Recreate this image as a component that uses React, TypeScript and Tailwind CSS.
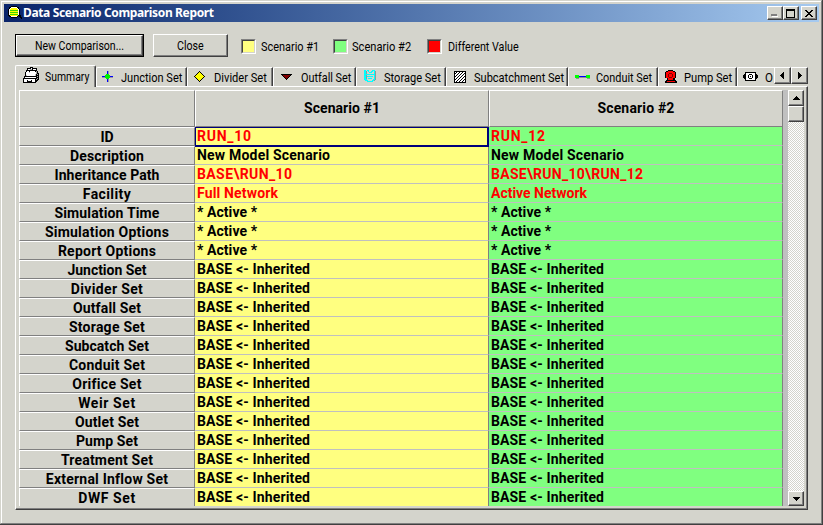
import { useLayoutEffect, useRef, useState, type ReactNode } from "react";

/** Text tracked so that it fills the given advance width. */
function Fit({ w, children, className = "" }: { w: number; children: string; className?: string }) {
  const ref = useRef<HTMLSpanElement>(null);
  const [spacing, setSpacing] = useState(0);
  useLayoutEffect(() => {
    const el = ref.current;
    if (el) setSpacing((w - el.getBoundingClientRect().width) / Math.max(1, children.length - 1));
  }, [w, children]);
  return (
    <span ref={ref} style={{ letterSpacing: spacing }} className={"inline-block whitespace-pre " + className}>
      {children}
    </span>
  );
}

/** Text condensed horizontally to the given width. */
function Narrow({ w, children, className = "" }: { w: number; children: string; className?: string }) {
  const ref = useRef<HTMLSpanElement>(null);
  const [scale, setScale] = useState(1);
  useLayoutEffect(() => {
    const el = ref.current;
    if (el) setScale(w / el.offsetWidth);
  }, [w, children]);
  return (
    <span style={{ width: w }} className={"block shrink-0 text-left whitespace-pre " + className}>
      <span ref={ref} style={{ transform: `scaleX(${scale})` }} className="inline-block origin-left">
        {children}
      </span>
    </span>
  );
}

function Icon({ children, w = 16, h = 16 }: { children: ReactNode; w?: number; h?: number }) {
  return (
    <svg width={w} height={h} viewBox={`0 0 ${w} ${h}`} shapeRendering="crispEdges" className="block shrink-0">
      {children}
    </svg>
  );
}

const SummaryIcon = () => (
  <Icon w={17} h={17}>
    <path d="M4 1h3V0h3v1h4v3h1v2h1v7h-1v1h-1v1h-1v1H0v-5h1V9h1V5h1V3h1z" fill="#000" />
    <path d="M5 2h2v1H5zM8 1h1v1H8zM10 2h3v1h-3zM4 4h2v1H4zM7 4h5v1H7zM3 5h10v4H3zM2 10h11v1H2zM1 12h11v3H1z" fill="#fff" />
    <path d="M7 2h2v1H7zM13 4h1v3h-1zM14 7h1v1h-1zM14 9h1v1h-1zM14 11h1v1h-1zM13 12h1v1h-1z" fill="#a0a0a0" />
    <path d="M4 13h1v1h3v-1h1v2H4z" fill="#000" />
    <path d="M3 8h1v1H3zM12 7h1v2h-1zM6 5h1v1H6z" fill="#c0c0c0" />
  </Icon>
);
const JunctionIcon = () => (
  <Icon>
    <path d="M8 3h1v11H8zM2 9h11v1H2z" fill="#9a9a9a" />
    <path d="M7 3h1v11H7zM2 8h11v1H2z" fill="#0000ff" />
    <path d="M6 6h3v1h1v3H9v1H6v-1H5V7h1z" fill="#00f000" />
  </Icon>
);
const DividerIcon = () => (
  <Icon>
    <path d="M7 3h1v1h1v1h1v1h1v1h1v1h1v1h-1v1h-1v1h-1v1H9v1H8v1H7v-1H6v-1H5v-1H4v-1H3V9H2V8h1V7h1V6h1V5h1V4h1z" fill="#000" />
    <path d="M7 4h1v1h1v1h1v1h1v1h1v1h-1v1h-1v1H9v1H8v1H7v-1H6v-1H5v-1H4V9H3V8h1V7h1V6h1V5h1z" fill="#ffff00" />
  </Icon>
);
const OutfallIcon = () => (
  <Icon>
    <path d="M2 6h11v1h-1v1h-1v1h-1v1H9v1H8v1H7v-1H6v-1H5V9H4V8H3V7H2z" fill="#000" />
    <path d="M4 7h7v1h-1v1H9v1H8v1H7v-1H6V9H5V8H4z" fill="#800000" />
  </Icon>
);
const StorageIcon = () => (
  <Icon>
    <path d="M4 3h1v8H4zM13 3h1v9h-1v1h-2v1H6v-1h5v-1h2z" fill="#8c9c9c" />
    <path d="M2 2h2v9h1v1h1v1h4v-1h1v-1h1V2h1v10h-1v1h-1v1H5v-1H3v-1H2z" fill="#00ffff" />
    <path d="M5 2h2v1h3V2h2v1h-1v1h-1v1H7V4H6V3H5z" fill="#00ffff" />
    <path d="M4 6h8v1H4zM5 8h6v1H5zM6 10h4v1H6z" fill="#00ffff" />
    <path d="M7 3h2v1H7z" fill="#d4d4cc" />
  </Icon>
);
const SubcatchIcon = () => (
  <Icon>
    <path d="M2 3h12v12H2z" fill="#000" />
    <path d="M3 4h10v10H3z" fill="#fff" />
    <path d="M3 6L5 4M3 9L8 4M3 12L11 4M4 14L13 5M7 14L13 8M10 14L13 11" stroke="#000" strokeWidth="1" />
  </Icon>
);
const ConduitIcon = () => (
  <Icon>
    <path d="M1 9h3v2H1zM4 9h8v1H4zM12 9h3v2h-3z" fill="#909090" />
    <path d="M3 8h9v1H3z" fill="#0000ff" />
    <path d="M0 7h4v3H0zM11 7h4v3h-4z" fill="#00ff00" />
  </Icon>
);
const PumpIcon = () => (
  <Icon>
    <path d="M5 2h5v1h2v1h1v6h-1v2h1v1h1v2H2v-2h1v-1h1v-2H2V4h1V3h2z" fill="#000" />
    <path d="M5 3h5v1h2v6h-2v1H5v-1H3V4h2zM4 13h8v1H4z" fill="#ff0000" />
    <path d="M6 5h3v1h1v3H9v1H6V9H5V6h1z" fill="#800000" />
    <path d="M6 6h3v3H6zM5 11h5v1H5z" fill="#ff0000" />
  </Icon>
);
const OrificeIcon = () => (
  <Icon>
    <path d="M2 4h11v2h1v1h1v3h-1v1h-1v2H2v-2H1v-1H0V7h1V6h1z" fill="#000" />
    <path d="M3 5h9v7H3z" fill="#fff" />
    <path d="M6 6h3v1h1v3H9v1H6v-1H5V7h1z" fill="#000" />
    <path d="M6 7h3v3H6z" fill="#fff" />
    <path d="M7 8h1v1H7z" fill="#000" />
  </Icon>
);

const tabs: { label: string; w: number; box: string; gap: string; icon: ReactNode }[] = [
  { label: "Junction Set", w: 61, box: "w-[91px] pl-[3px]", gap: "ml-[5px]", icon: <JunctionIcon /> },
  { label: "Divider Set", w: 53, box: "w-[86px] pl-[4px]", gap: "ml-[6px]", icon: <DividerIcon /> },
  { label: "Outfall Set", w: 50, box: "w-[83px] pl-[5px]", gap: "ml-[6px]", icon: <OutfallIcon /> },
  { label: "Storage Set", w: 57, box: "w-[90px] pl-[5px]", gap: "ml-[6px]", icon: <StorageIcon /> },
  { label: "Subcatchment Set", w: 90, box: "w-[122px] pl-[5px]", gap: "ml-[6px]", icon: <SubcatchIcon /> },
  { label: "Conduit Set", w: 56, box: "w-[90px] pl-[6px]", gap: "ml-[5px]", icon: <ConduitIcon /> },
  { label: "Pump Set", w: 48, box: "w-[79px] pl-[4px]", gap: "ml-[5px]", icon: <PumpIcon /> },
  { label: "O", w: 8, box: "w-[90px] pl-[5px]", gap: "ml-[6px]", icon: <OrificeIcon /> },
];

type Cell = [string, number];
const inherited: Cell = ["BASE <- Inherited", 113];
const active: Cell = ["* Active *", 60];
const model: Cell = ["New Model Scenario", 133];
const rows: { name: string; w: number; a: Cell; b: Cell; diff?: boolean }[] = [
  { name: "ID", w: 13, a: ["RUN_10", 54], b: ["RUN_12", 54], diff: true },
  { name: "Description", w: 74, a: model, b: model },
  { name: "Inheritance Path", w: 105, a: ["BASE\\RUN_10", 95], b: ["BASE\\RUN_10\\RUN_12", 152], diff: true },
  { name: "Facility", w: 48, a: ["Full Network", 81], b: ["Active Network", 96], diff: true },
  { name: "Simulation Time", w: 105, a: active, b: active },
  { name: "Simulation Options", w: 124, a: active, b: active },
  { name: "Report Options", w: 98, a: active, b: active },
  { name: "Junction Set", w: 79, a: inherited, b: inherited },
  { name: "Divider Set", w: 72, a: inherited, b: inherited },
  { name: "Outfall Set", w: 68, a: inherited, b: inherited },
  { name: "Storage Set", w: 76, a: inherited, b: inherited },
  { name: "Subcatch Set", w: 84, a: inherited, b: inherited },
  { name: "Conduit Set", w: 76, a: inherited, b: inherited },
  { name: "Orifice Set", w: 69, a: inherited, b: inherited },
  { name: "Weir Set", w: 57, a: inherited, b: inherited },
  { name: "Outlet Set", w: 64, a: inherited, b: inherited },
  { name: "Pump Set", w: 62, a: inherited, b: inherited },
  { name: "Treatment Set", w: 92, a: inherited, b: inherited },
  { name: "External Inflow Set", w: 122, a: inherited, b: inherited },
  { name: "DWF Set", w: 57, a: inherited, b: inherited },
];

const raised =
  "border border-t-white border-l-white border-r-[#404040] border-b-[#404040] bg-[#d4d4cc] shadow-[inset_-1px_-1px_#808080] flex items-center justify-center shrink-0";

function Swatch({ color }: { color: string }) {
  return (
    <div className="size-[15px] shrink-0 border border-t-[#808080] border-l-[#808080] border-r-white border-b-white">
      <div className={"size-full border border-t-[#404040] border-l-[#404040] border-r-[#d4d4cc] border-b-[#d4d4cc] " + color} />
    </div>
  );
}

function DataCell({ cell, diff, color, selected }: { cell: Cell; diff?: boolean; color: string; selected?: boolean }) {
  return (
    <div className={"relative h-[19px] w-[294px] border-r border-b border-b-[#c0c0c0] border-r-[#808080] pl-[2px] leading-[18px] " + color + (diff ? " text-[#ff0000]" : "")}>
      <Fit w={cell[1]}>{cell[0]}</Fit>
      {selected && (
        <div className="absolute left-0 top-0 z-10 h-[20px] w-[294px] border-t border-r-2 border-b-2 border-l border-[#00007b]" />
      )}
    </div>
  );
}

const headCell = "border-t border-l border-r border-b border-t-white border-l-white border-r-[#808080] border-b-[#808080] bg-[#d4d4cc] flex items-center justify-center shrink-0";

export default function App() {
  return (
    <div className="h-[525px] w-[823px] overflow-hidden bg-[#d4d4cc] border-r border-b border-[#404040] font-['Roboto','Liberation_Sans',sans-serif] text-[13px] text-black">
      <div className="h-full w-full border-t border-l border-r border-b border-t-[#d4d4cc] border-l-[#d4d4cc] border-r-[#808080] border-b-[#808080]">
        <div className="h-full w-full border-t border-l border-white pt-[2px] pl-[2px]">
          <header className="flex h-[18px] w-[815px] items-center bg-linear-to-r from-[#0a246a] to-[#a6caf0] pl-[3px] pr-[2px]">
            <Icon w={15} h={16}>
              <path d="M4 1h6v1h2v2h1v6h1v2h1v2h-1v-1h-1v-1h-1v-1h-1v1h-1v1H4v-1H2v-1H1V4h1V2h2z" fill="#000" />
              <path d="M4 2h6v1h1v1h1v6h-1v1h-1v1H4v-1H3v-1H2V4h1V3h1z" fill="#fff" />
              <path d="M4 3h6v1H4zM3 4h8v7H3z" fill="#ffff00" />
              <path d="M3 5h8v1H3zM3 7h8v1H3zM3 9h8v1H3z" fill="#40d800" />
            </Icon>
            <Fit w={191} className="ml-[1px] font-['Noto_Sans',sans-serif] text-[12px] font-bold leading-[18px] text-white">
              Data Scenario Comparison Report
            </Fit>
            <div className="ml-auto flex">
              <div className={raised + " h-[14px] w-4"}>
                <Icon w={8} h={8}><path d="M1 7h6v1H1z" fill="#fff" /><path d="M0 5h6v2H0z" fill="#808080" /></Icon>
              </div>
              <div className={raised + " h-[14px] w-4"}>
                <Icon w={10} h={9}><path d="M0 0h9v9H0zM1 2v6h7V2z" fill="#000" fillRule="evenodd" /></Icon>
              </div>
              <div className={raised + " ml-[2px] h-[14px] w-4"}>
                <Icon w={8} h={7}><path d="M0 0h2v1h1v1h2V1h1V0h2v1H7v1H6v1H5v1h1v1h1v1h1v1H6V6H5V5H3v1H2v1H0V6h1V5h1V4h1V3H2V2H1V1H0z" fill="#000" /></Icon>
              </div>
            </div>
          </header>

          <div className="mt-3 ml-[11px] flex h-[23px] items-center">
            <button className="h-[23px] w-[129px] shrink-0 border border-black">
              <span className={raised + " h-full w-full"}><Narrow w={89}>New Comparison...</Narrow></span>
            </button>
            <button className={raised + " ml-[9px] h-[23px] w-[75px]"}><Narrow w={27}>Close</Narrow></button>
            <div className="ml-[13px] flex items-center pt-[2px]">
              <Swatch color="bg-[#ffff80]" />
              <Narrow w={58} className="ml-[5px]">Scenario #1</Narrow>
            </div>
            <div className="ml-[14px] flex items-center pt-[2px]">
              <Swatch color="bg-[#80ff80]" />
              <Narrow w={59} className="ml-[4px]">Scenario #2</Narrow>
            </div>
            <div className="ml-[16px] flex items-center pt-[2px]">
              <Swatch color="bg-[#ff0000]" />
              <Narrow w={71} className="ml-[6px]">Different Value</Narrow>
            </div>
          </div>

          <nav className="mt-2 ml-[11px] flex h-[21px] w-[793px] items-end">
            <div className="relative z-10 -mb-px flex h-[22px] w-[81px] shrink-0 rounded-tl-[2px] rounded-tr-[2px] border-t border-l border-r border-t-white border-l-white border-r-[#404040] bg-[#d4d4cc] pl-[7px] shadow-[inset_-1px_0_#808080]">
              <div className="mt-px"><SummaryIcon /></div>
              <Narrow w={44} className="ml-[5px] mt-[3px] leading-[15px]">Summary</Narrow>
            </div>
            <div className="flex w-[678px] shrink-0 overflow-hidden">
              {tabs.map((t) => (
                <div key={t.label} className={"flex h-[19px] shrink-0 rounded-tl-[2px] border-t border-l border-r border-t-white border-l-white border-r-[#404040] shadow-[inset_-1px_0_#808080] " + t.box}>
                  {t.icon}
                  <Narrow w={t.w} className={"mt-[2px] leading-[15px] " + t.gap}>{t.label}</Narrow>
                </div>
              ))}
            </div>
            <div className="mb-[2px] flex">
              <div className={raised + " h-[17px] w-[17px]"}>
                <Icon w={6} h={7}><path d="M4 0v7H3V6H2V5H1V4H0V3h1V2h1V1h1V0z" fill="#000" /></Icon>
              </div>
              <div className={raised + " h-[17px] w-[17px]"}>
                <Icon w={4} h={7}><path d="M0 0h1v1h1v1h1v1h1v1H3v1H2v1H1v1H0z" fill="#000" /></Icon>
              </div>
            </div>
          </nav>

          <main className="ml-[11px] flex h-[424px] w-[793px] border border-t-white border-l-white border-r-[#404040] border-b-[#404040] pl-[3px] pt-[3px] shadow-[inset_-1px_-1px_#808080]">
            <div className="h-[416px] w-[769px] shrink-0 overflow-hidden bg-[#c0c0c0] text-[14px] font-bold">
              <div className="flex h-[37px] w-[764px]">
                <div className={headCell + " w-[176px]"} />
                <div className={headCell + " w-[294px]"}><Fit w={76}>Scenario #1</Fit></div>
                <div className={headCell + " w-[294px]"}><Fit w={77}>Scenario #2</Fit></div>
              </div>
              {rows.map((r, i) => (
                <div key={r.name} className="flex h-[19px] w-[764px]">
                  <div className={headCell + " h-[19px] w-[176px] pt-[2px] leading-[17px]"}><Fit w={r.w}>{r.name}</Fit></div>
                  <DataCell cell={r.a} diff={r.diff} color="bg-[#ffff80]" selected={i === 0} />
                  <DataCell cell={r.b} diff={r.diff} color="bg-[#80ff80]" />
                </div>
              ))}
            </div>
            <div className="flex h-[416px] w-4 flex-col bg-[repeating-conic-gradient(#ffffff_0_25%,#d4d4cc_0_50%)] bg-size-[2px_2px]">
              <div className={raised + " h-4 w-4"}>
                <Icon w={7} h={4}><path d="M3 0h1v1h1v1h1v1h1v1H0V3h1V2h1V1h1z" fill="#000" /></Icon>
              </div>
              <div className={raised + " h-4 w-4"} />
              <div className={raised + " mt-auto h-[15px] w-4"}>
                <Icon w={7} h={4}><path d="M0 0h7v1H6v1H5v1H4v1H3V3H2V2H1V1H0z" fill="#000" /></Icon>
              </div>
            </div>
          </main>
        </div>
      </div>
    </div>
  );
}
